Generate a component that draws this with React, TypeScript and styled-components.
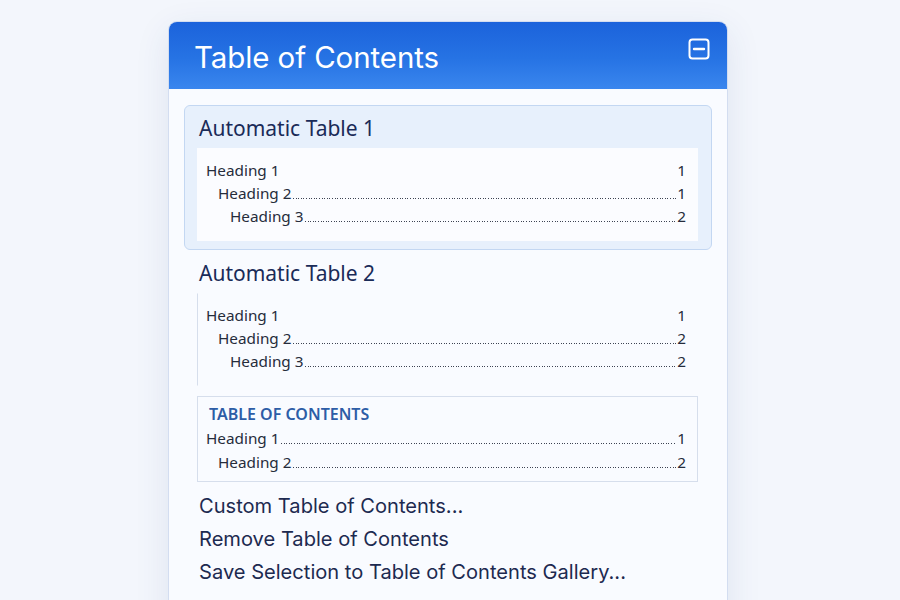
import styled, { createGlobalStyle } from 'styled-components';

interface TocLine {
  text: string;
  page: string;
  level: number;
  leader: boolean;
}

interface TocStyle {
  name?: string;
  heading?: string;
  selected?: boolean;
  variant: 'boxed' | 'ruled' | 'framed';
  lines: TocLine[];
}

const STYLES: TocStyle[] = [
  {
    name: 'Automatic Table 1',
    selected: true,
    variant: 'boxed',
    lines: [
      { text: 'Heading 1', page: '1', level: 0, leader: false },
      { text: 'Heading 2', page: '1', level: 1, leader: true },
      { text: 'Heading 3', page: '2', level: 2, leader: true },
    ],
  },
  {
    name: 'Automatic Table 2',
    variant: 'ruled',
    lines: [
      { text: 'Heading 1', page: '1', level: 0, leader: false },
      { text: 'Heading 2', page: '2', level: 1, leader: true },
      { text: 'Heading 3', page: '2', level: 2, leader: true },
    ],
  },
  {
    heading: 'TABLE OF CONTENTS',
    variant: 'framed',
    lines: [
      { text: 'Heading 1', page: '1', level: 0, leader: true },
      { text: 'Heading 2', page: '2', level: 1, leader: true },
    ],
  },
];

const MENU_ITEMS = [
  'Custom Table of Contents...',
  'Remove Table of Contents',
  'Save Selection to Table of Contents Gallery...',
];

const CollapseIcon = () => (
  <svg width="22" height="22" viewBox="0 0 22 22" fill="none">
    <rect x="1.5" y="1.5" width="19" height="19" rx="3" stroke="white" strokeWidth="2" />
    <line x1="6" y1="11" x2="16" y2="11" stroke="white" strokeWidth="2.4" strokeLinecap="round" />
  </svg>
);

const App = () => {
  return (
    <>
      <GlobalStyle />
      <Panel>
        <Header>
          <Title>Table of Contents</Title>
          <IconButton aria-label="Collapse">
            <CollapseIcon />
          </IconButton>
        </Header>
        <Body>
          {STYLES.map((style, i) => (
            <StyleCard key={i} selected={style.selected} hasName={!!style.name}>
              {style.name && <StyleName>{style.name}</StyleName>}
              <Preview variant={style.variant}>
                {style.heading && <PreviewHeading>{style.heading}</PreviewHeading>}
                {style.lines.map((line, j) => (
                  <Entry key={j} level={line.level} tall={style.variant === 'framed'}>
                    <EntryText>{line.text}</EntryText>
                    <Leader visible={line.leader} />
                    <EntryPage>{line.page}</EntryPage>
                  </Entry>
                ))}
              </Preview>
            </StyleCard>
          ))}
          <Menu>
            {MENU_ITEMS.map((item) => (
              <MenuItem key={item}>{item}</MenuItem>
            ))}
          </Menu>
        </Body>
      </Panel>
    </>
  );
};

export default App;

const GlobalStyle = createGlobalStyle`
  html, body {
    margin: 0;
    padding: 0;
    background: #f3f6fc;
    height: 600px;
    overflow: hidden;
  }
`;

const Panel = styled.div`
  width: 560px;
  height: 620px;
  margin: 21px 0 0 168px;
  box-sizing: border-box;
  border: 1px solid #d3ddf0;
  border-radius: 9px;
  background: #f9fbff;
  box-shadow: 0 10px 34px rgba(40, 70, 130, 0.1);
  overflow: hidden;
  font-family: Inter, 'Liberation Sans', Arial, sans-serif;
`;

const Header = styled.div`
  display: flex;
  align-items: center;
  justify-content: space-between;
  height: 68px;
  padding: 0 18px 0 26px;
  margin: -1px -1px 0;
  background: linear-gradient(180deg, #1b62db 0%, #2673e4 55%, #3a86ee 100%);
`;

const Title = styled.h1`
  margin: 3px 0 0;
  font-size: 29.5px;
  font-weight: 400;
  color: #ffffff;
  letter-spacing: -0.1px;
`;

const IconButton = styled.button`
  display: flex;
  padding: 0;
  margin-top: -12px;
  border: none;
  background: none;
`;

const Body = styled.div`
  display: flex;
  flex-direction: column;
  padding: 16px 15px 0;
`;

const StyleCard = styled.div<{ selected?: boolean; hasName: boolean }>`
  padding: ${(p) => (p.hasName ? '8px 13px 8px 12px' : '0 13px 0 12px')};
  border: 1px solid ${(p) => (p.selected ? '#c3d7f2' : 'transparent')};
  border-radius: 6px;
  background: ${(p) => (p.selected ? '#e7f0fc' : 'transparent')};
`;

const StyleName = styled.div`
  margin-left: 2px;
  font-family: 'Noto Sans', 'Open Sans', sans-serif;
  font-size: 21px;
  line-height: 28px;
  color: #1a2b58;
`;

const Preview = styled.div<{ variant: 'boxed' | 'ruled' | 'framed' }>`
  margin-top: ${(p) => (p.variant === 'framed' ? '0' : '6px')};
  padding: ${(p) => (p.variant === 'framed' ? '5px 11px 7px 8px' : '10px 11px 12px 8px')};
  background: ${(p) => (p.variant === 'boxed' ? '#fbfcff' : 'transparent')};
  border: 1px solid transparent;
  border-left-color: ${(p) => (p.variant === 'boxed' ? 'transparent' : '#d6deec')};
  ${(p) => p.variant === 'framed' && 'border-color: #d6deec;'}
  font-family: 'Noto Sans', 'Open Sans', sans-serif;
  color: #262c3b;
`;

const PreviewHeading = styled.div`
  padding-left: 3px;
  font-size: 16px;
  line-height: 24px;
  font-weight: 600;
  color: #2d5da6;
`;

const Entry = styled.div<{ level: number; tall: boolean }>`
  display: flex;
  align-items: baseline;
  padding-left: ${(p) => p.level * 12}px;
  font-size: 15.3px;
  line-height: ${(p) => (p.tall ? '24px' : '23px')};
`;

const EntryText = styled.span`
  white-space: nowrap;
`;

const Leader = styled.span<{ visible: boolean }>`
  flex: 1;
  align-self: flex-end;
  height: 1px;
  margin: 0 1px 6px;
  background-image: ${(p) =>
    p.visible ? 'repeating-linear-gradient(90deg, #3d4352 0 1px, transparent 1px 2.6px)' : 'none'};
`;

const EntryPage = styled.span`
  white-space: nowrap;
`;

const Menu = styled.div`
  display: flex;
  flex-direction: column;
  padding: 7px 0 0 15px;
`;

const MenuItem = styled.div`
  font-size: 20.1px;
  line-height: 33px;
  color: #1d2a50;
  cursor: default;
`;
